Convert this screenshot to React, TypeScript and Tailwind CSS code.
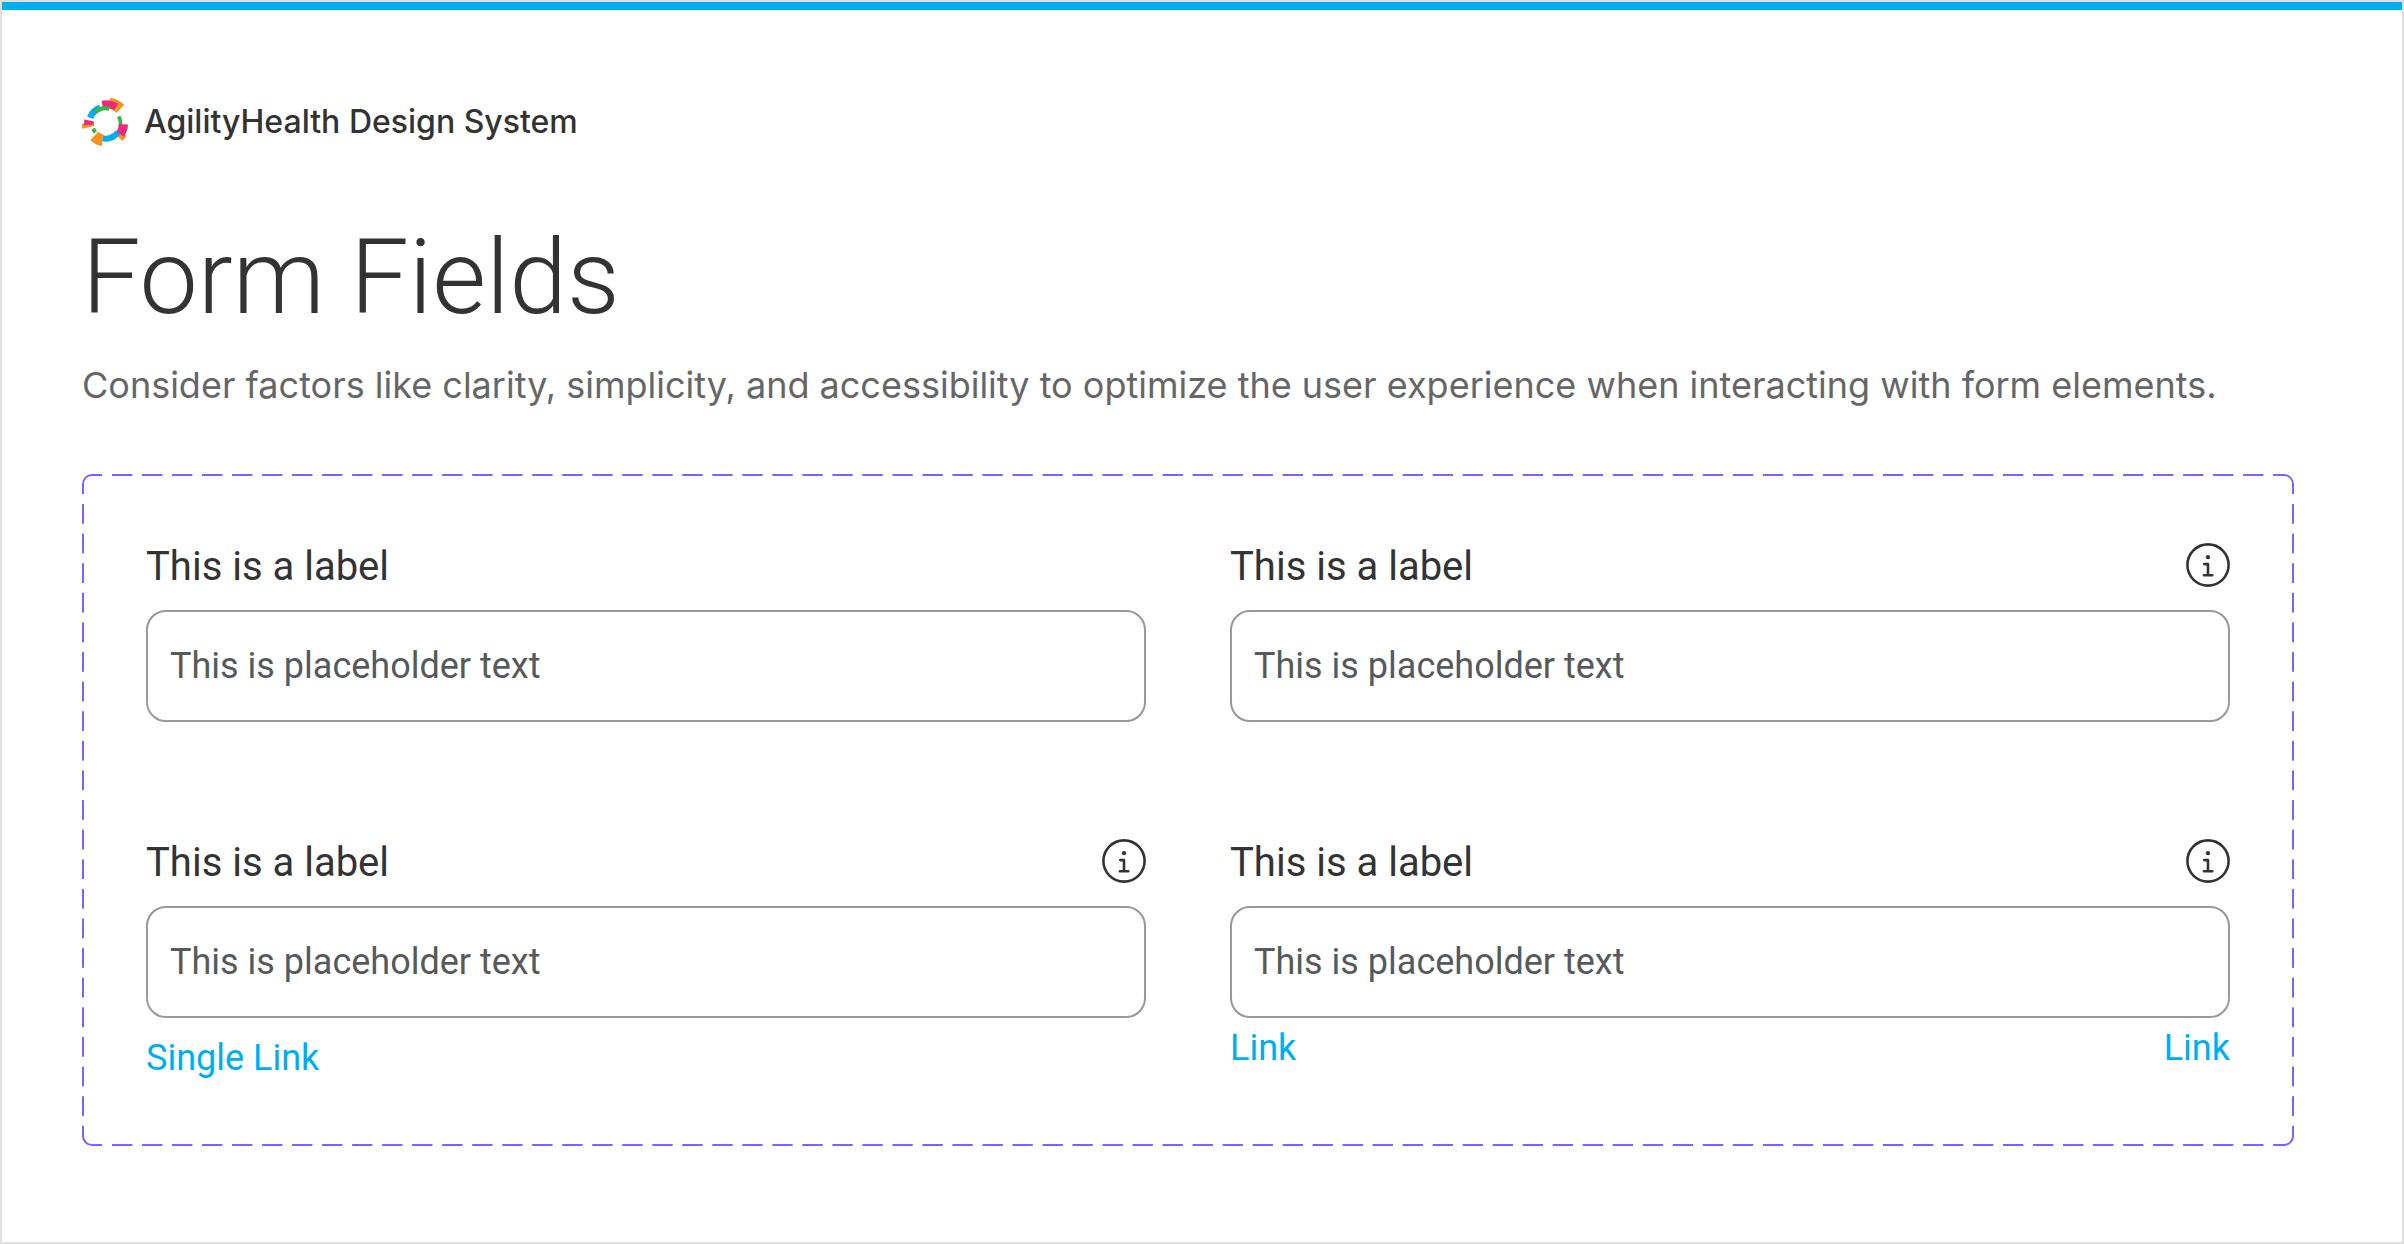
import { useId } from 'react';

type FieldLink = { label: string; href: string };

type FormFieldProps = {
    label: string;
    placeholder: string;
    info?: boolean;
    links?: FieldLink[];
};

const LOGO_CENTER = { x: 107, y: 101 };

// inner radius, outer radius, start angle, end angle (degrees, clockwise from 3 o'clock)
const logoSegments: { color: string; arc: [number, number, number, number] }[] = [
    { color: '#F7941D', arc: [46, 79, -80, -45] },
    { color: '#F0287D', arc: [48, 70, -100, -58] },
    { color: '#00AEF0', arc: [40, 60, -159, -109] },
    { color: '#39B54A', arc: [40, 53, -133, -77] },
    { color: '#39B54A', arc: [39, 50, -29, 16] },
    { color: '#F7941D', arc: [50, 72, 30, 46] },
    { color: '#00AEF0', arc: [36, 54, 34, 110] },
    { color: '#F0287D', arc: [40, 67, 2, 36] },
    { color: '#F7941D', arc: [33, 68, 100, 133] },
    { color: '#39B54A', arc: [34, 46, 140, 159] },
    { color: '#F7941D', arc: [35, 72, 168, 180] },
    { color: '#F0287D', arc: [36, 65, 176, 191] },
];

const ringSegment = ([inner, outer, start, end]: [number, number, number, number]) => {
    const point = (radius: number, angle: number) => {
        const rad = (angle * Math.PI) / 180;
        return `${(LOGO_CENTER.x + radius * Math.cos(rad)).toFixed(2)} ${(LOGO_CENTER.y + radius * Math.sin(rad)).toFixed(2)}`;
    };
    return `M${point(inner, start)}L${point(outer, start)}A${outer} ${outer} 0 0 1 ${point(outer, end)}L${point(inner, end)}A${inner} ${inner} 0 0 0 ${point(inner, start)}Z`;
};

const Logo = () => (
    <svg viewBox="36 24 144 144" className="size-12" aria-hidden="true">
        {logoSegments.map((segment, i) => (
            <path key={i} d={ringSegment(segment.arc)} fill={segment.color} />
        ))}
    </svg>
);

const InfoIcon = () => (
    <svg viewBox="0 0 44 44" className="size-11" fill="none" stroke="currentColor" strokeWidth="2.6" strokeLinecap="round" strokeLinejoin="round" aria-hidden="true">
        <circle cx="22" cy="22" r="20.6" />
        <circle cx="22" cy="14.2" r="2.1" fill="currentColor" stroke="none" />
        <path d="M18.3 21.1H22V32.2M17.9 32.2H26.3" />
    </svg>
);

// Long dashes with solid rounded corners, which border-dashed can't give
const DashedOutline = () => (
    <div className="absolute inset-0 pointer-events-none" aria-hidden="true">
        <span className="absolute top-0 left-0 size-5 border-t-2 border-l-2 border-[#7b61ff] rounded-tl-[10px]"></span>
        <span className="absolute top-0 right-0 size-5 border-t-2 border-r-2 border-[#7b61ff] rounded-tr-[10px]"></span>
        <span className="absolute bottom-0 left-0 size-5 border-b-2 border-l-2 border-[#7b61ff] rounded-bl-[10px]"></span>
        <span className="absolute bottom-0 right-0 size-5 border-b-2 border-r-2 border-[#7b61ff] rounded-br-[10px]"></span>
        <span className="absolute top-0 left-[30px] right-5 h-[2px] bg-[linear-gradient(to_right,#7b61ff_67%,transparent_67%)] [background-size:30px_2px] [background-repeat:round_no-repeat]"></span>
        <span className="absolute bottom-0 left-[30px] right-5 h-[2px] bg-[linear-gradient(to_right,#7b61ff_67%,transparent_67%)] [background-size:30px_2px] [background-repeat:round_no-repeat]"></span>
        <span className="absolute left-0 top-[30px] bottom-5 w-[2px] bg-[linear-gradient(to_bottom,#7b61ff_67%,transparent_67%)] [background-size:2px_30px] [background-repeat:no-repeat_round]"></span>
        <span className="absolute right-0 top-[30px] bottom-5 w-[2px] bg-[linear-gradient(to_bottom,#7b61ff_67%,transparent_67%)] [background-size:2px_30px] [background-repeat:no-repeat_round]"></span>
    </div>
);

const FormField = ({ label, placeholder, info = false, links = [] }: FormFieldProps) => {
    const id = useId();

    return (
        <div className="flex flex-col">
            <div className="flex items-center justify-between h-11 mb-[23px]">
                <label htmlFor={id} className="pt-1 text-[40px] leading-[48px] text-[#333333]">{label}</label>
                {info && (
                    <button type="button" aria-label="More information" className="text-[#333333]">
                        <InfoIcon />
                    </button>
                )}
            </div>
            <input
                id={id}
                type="text"
                placeholder={placeholder}
                className="w-full h-28 px-[22px] border-2 border-[#999999] rounded-[20px] text-4xl text-[#333333] placeholder:text-[#58595b] outline-none focus:border-[#00aef0]"
            />
            {links.length > 0 && (
                <div className={`flex justify-between text-4xl leading-[48px] text-[#00aef0] ${links.length > 1 ? 'mt-[6px]' : 'mt-4'}`}>
                    {links.map((link, i) => (
                        <a key={i} href={link.href}>{link.label}</a>
                    ))}
                </div>
            )}
        </div>
    );
};

export default function App() {
    return (
        <main className="min-h-screen bg-white border-2 border-[#e0e0e0] font-['Roboto',sans-serif]">
            <div className="h-2 bg-[#00aef0]"></div>
            <div className="pl-20 pr-[108px] pt-[88px] pb-24">
                <header className="font-['Inter',sans-serif]">
                    <div className="flex items-center gap-[14px]">
                        <Logo />
                        <span className="text-[32px] leading-[48px] font-medium text-[#333333]">AgilityHealth Design System</span>
                    </div>
                    <h1 className="mt-16 font-['Roboto',sans-serif] text-[104px] leading-[136px] font-[350] text-[#333333]">Form Fields</h1>
                    <p className="mt-[15px] text-4xl leading-[48px] text-[#666666]">
                        Consider factors like clarity, simplicity, and accessibility to optimize the user experience when interacting with form elements.
                    </p>
                </header>

                <section className="relative mt-[65px] px-16 pt-[69px] pb-16">
                    <DashedOutline />
                    <form className="grid grid-cols-2 gap-x-[84px] gap-y-[117px]">
                        <FormField label="This is a label" placeholder="This is placeholder text" />
                        <FormField label="This is a label" placeholder="This is placeholder text" info />
                        <FormField
                            label="This is a label"
                            placeholder="This is placeholder text"
                            info
                            links={[{ label: 'Single Link', href: '#' }]}
                        />
                        <FormField
                            label="This is a label"
                            placeholder="This is placeholder text"
                            info
                            links={[{ label: 'Link', href: '#' }, { label: 'Link', href: '#' }]}
                        />
                    </form>
                </section>
            </div>
        </main>
    );
}
